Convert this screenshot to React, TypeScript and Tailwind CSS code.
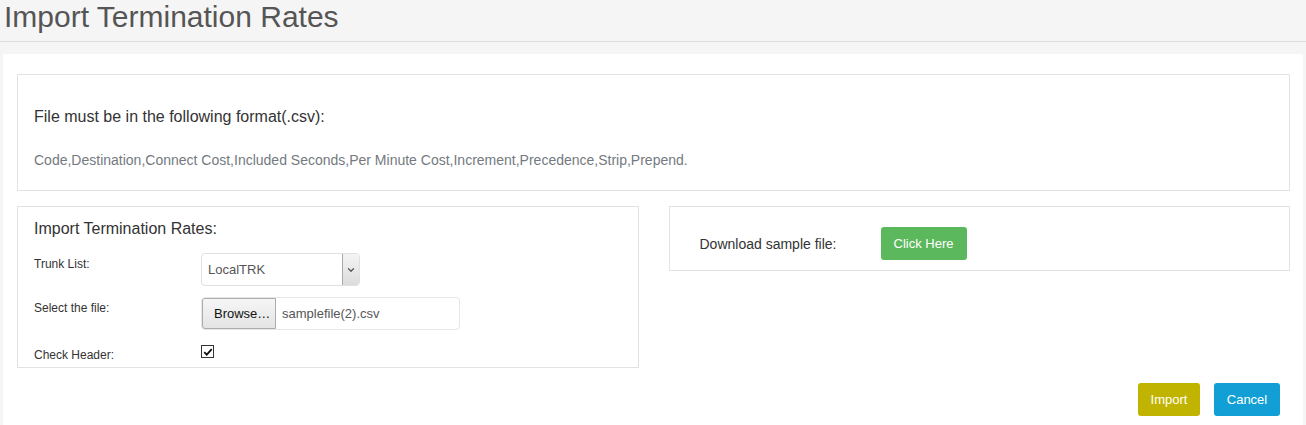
import { ChevronDown } from "lucide-react";

const formatFields =
  "Code,Destination,Connect Cost,Included Seconds,Per Minute Cost,Increment,Precedence,Strip,Prepend.";

function FieldRow({ label, children, className = "" }: { label: string; children: React.ReactNode; className?: string }) {
  return (
    <div className={`flex items-start ${className}`}>
      <label className="w-[167px] shrink-0 pt-[3px] text-[12px] leading-[17px] text-[#333]">{label}</label>
      {children}
    </div>
  );
}

export default function App() {
  return (
    <div className="min-h-screen bg-[#f5f5f5] font-['Liberation_Sans',Arial,sans-serif]">
      <div className="h-[42px] border-b border-[#dcdcdc]">
        <h1 className="pl-[4px] text-[30px] leading-[34px] text-[#555]">Import Termination Rates</h1>
      </div>

      <div className="mx-[3px] mt-[12px] bg-white pb-[20px] pl-[14px] pr-[13px] pt-[20px]">
        <div className="border border-[#e3e3e3] pb-[20px] pl-[16px] pt-[31px]">
          <h4 className="text-[16px] leading-[22px] text-[#333]">File must be in the following format(.csv):</h4>
          <p className="mt-[22px] text-[14px] leading-[20px] text-[#747a80]">{formatFields}</p>
        </div>

        <div className="mt-[15px] grid grid-cols-2 items-start gap-[30px]">
          <div className="border border-[#e3e3e3] pb-[3px] pl-[16px] pt-[11px]">
            <h4 className="text-[16px] leading-[22px] text-[#333]">Import Termination Rates:</h4>

            <FieldRow label="Trunk List:" className="mt-[13px]">
              <div className="flex h-[33px] w-[159px] items-stretch rounded-[4px] border border-[#e0e0e0] bg-white">
                <span className="flex flex-1 items-center pl-[6px] text-[13px] text-[#555]">LocalTRK</span>
                <span className="flex w-[17px] items-center justify-center rounded-r-[3px] border-l border-[#a9a9a9] bg-gradient-to-b from-[#f4f4f4] to-[#dcdcdc]">
                  <ChevronDown className="h-[10px] w-[10px] text-[#555]" strokeWidth={3} />
                </span>
              </div>
            </FieldRow>

            <FieldRow label="Select the file:" className="mt-[11px]">
              <div className="flex h-[33px] w-[259px] items-stretch rounded-[4px] border border-[#e6e6e6] bg-white">
                <span className="flex w-[74px] items-center rounded-l-[3px] border border-[#adadad] bg-gradient-to-b from-[#f6f6f6] to-[#e4e4e4] pl-[11px] text-[13px] text-[#111]">
                  Browse…
                </span>
                <span className="flex items-center pl-[6px] text-[13px] text-[#555]">samplefile(2).csv</span>
              </div>
            </FieldRow>

            <FieldRow label="Check Header:" className="mt-[14px]">
              <span className="mt-[1px] flex h-[13px] w-[13px] items-center justify-center border border-[#333] bg-white">
                <svg viewBox="0 0 12 12" className="h-[10px] w-[10px]">
                  <path d="M1.5 6.2 L4.5 9.2 L10.5 2.5" fill="none" stroke="#111" strokeWidth="2.2" />
                </svg>
              </span>
            </FieldRow>
          </div>

          <div className="flex items-center border border-[#e3e3e3] pb-[10px] pl-[30px] pt-[20px]">
            <span className="w-[181px] text-[14px] leading-[20px] text-[#333]">Download sample file:</span>
            <button className="h-[33px] w-[86px] rounded-[3px] bg-[#5cb85c] text-[13px] text-white">Click Here</button>
          </div>
        </div>

        <div className="mr-[10px] mt-[15px] flex justify-end gap-[14px]">
          <button className="h-[33px] w-[62px] rounded-[3px] bg-[#c1b400] text-[13px] text-white">Import</button>
          <button className="h-[33px] w-[66px] rounded-[3px] bg-[#129fd6] text-[13px] text-white">Cancel</button>
        </div>
      </div>
    </div>
  );
}
